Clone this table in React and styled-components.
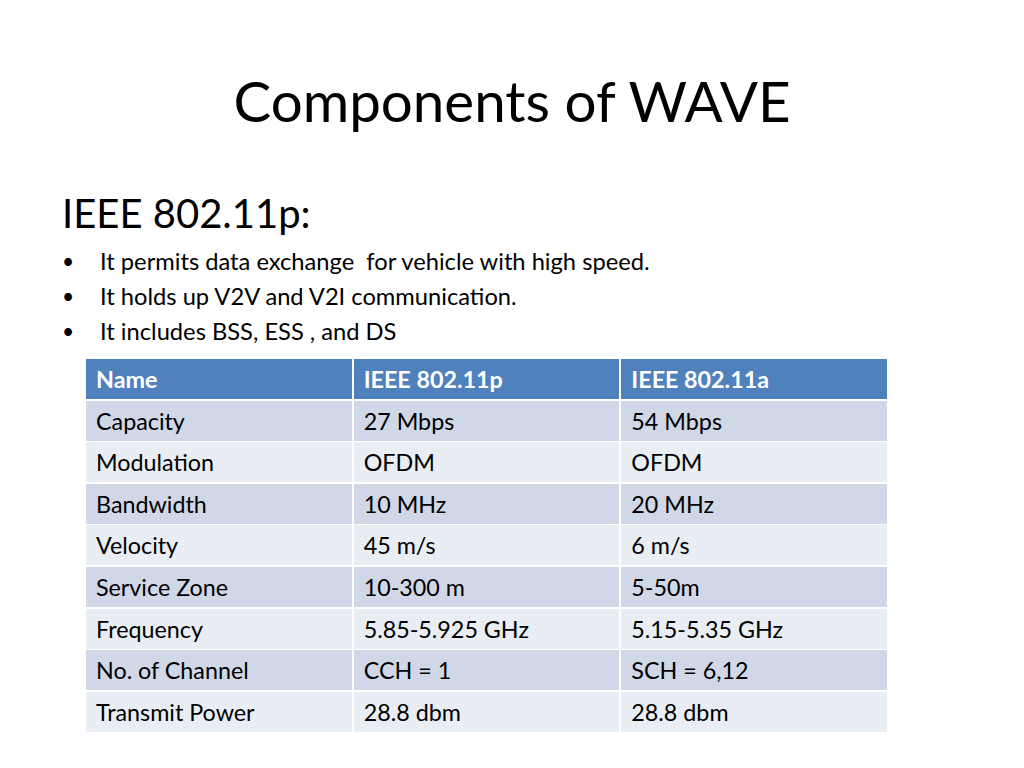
import React from "react";
import styled, { createGlobalStyle } from "styled-components";

const GlobalStyle = createGlobalStyle`
  html, body {
    margin: 0;
    padding: 0;
    background: #ffffff;
  }
  body {
    font-family: Lato, "Open Sans", sans-serif;
    color: #000000;
  }
`;

const Slide = styled.div`
  width: 1024px;
  height: 768px;
  box-sizing: border-box;
  padding: 68px 0 0 62px;
  display: flex;
  flex-direction: column;
  overflow: hidden;
`;

const Title = styled.h1`
  margin: 0 62px 0 0;
  font-weight: 400;
  font-size: 56.5px;
  line-height: 64px;
  text-align: center;
`;

const Heading = styled.h2`
  margin: 58px 0 0 0;
  font-weight: 400;
  font-size: 40px;
  line-height: 46px;
`;

const Bullets = styled.ul`
  list-style: none;
  margin: 7px 0 0 0;
  padding: 0;
  display: flex;
  flex-direction: column;
`;

const Bullet = styled.li`
  display: flex;
  align-items: center;
  height: 35px;
  font-size: 23.7px;

  &::before {
    content: "•";
    width: 38px;
    flex: none;
    font-size: 21px;
  }
`;

const Table = styled.div`
  margin: 11px 0 0 24px;
  width: 801px;
  display: grid;
  grid-template-columns: repeat(3, 1fr);
  grid-auto-rows: 40px;
  column-gap: 2px;
  row-gap: 1.6px;
`;

const Cell = styled.div`
  display: flex;
  align-items: center;
  padding: 0 10px;
  font-size: 23.3px;
  font-weight: ${(p) => (p.$head ? 700 : 400)};
  color: ${(p) => (p.$head ? "#ffffff" : "#000000")};
  background: ${(p) =>
    p.$head ? "#4f81bd" : p.$odd ? "#d0d8e8" : "#e9edf4"};
`;

const rows = [
  ["Capacity", "27 Mbps", "54 Mbps"],
  ["Modulation", "OFDM", "OFDM"],
  ["Bandwidth", "10 MHz", "20 MHz"],
  ["Velocity", "45 m/s", "6 m/s"],
  ["Service Zone", "10-300 m", "5-50m"],
  ["Frequency", "5.85-5.925 GHz", "5.15-5.35 GHz"],
  ["No. of Channel", "CCH = 1", "SCH = 6,12"],
  ["Transmit Power", "28.8 dbm", "28.8 dbm"],
];

export default function App() {
  return (
    <>
      <GlobalStyle />
      <Slide>
        <Title>Components of WAVE</Title>
        <Heading>IEEE 802.11p:</Heading>
        <Bullets>
          <Bullet>It permits data exchange&nbsp; for vehicle with high speed.</Bullet>
          <Bullet>It holds up V2V and V2I communication.</Bullet>
          <Bullet>It includes BSS, ESS , and DS</Bullet>
        </Bullets>
        <Table>
          {["Name", "IEEE 802.11p", "IEEE 802.11a"].map((h) => (
            <Cell key={h} $head>
              {h}
            </Cell>
          ))}
          {rows.map((r, i) =>
            r.map((c, j) => (
              <Cell key={i + "-" + j} $odd={i % 2 === 0}>
                {c}
              </Cell>
            ))
          )}
        </Table>
      </Slide>
    </>
  );
}
